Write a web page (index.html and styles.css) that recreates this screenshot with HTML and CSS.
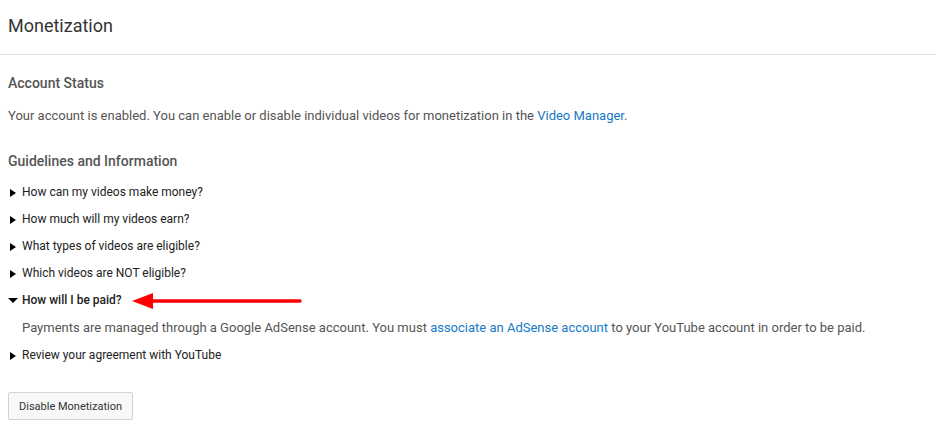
FILE: index.html
```html
<!DOCTYPE html>
<html>
<head>
<meta charset="utf-8">
<link rel="stylesheet" href="styles.css">
</head>
<body>
<div class="header"><h1 class="title">Monetization</h1></div>
<div class="content">
  <h2 class="section-title">Account Status</h2>
  <p class="text">Your account is enabled. You can enable or disable individual videos for monetization in the <a class="link" href="#">Video Manager</a>.</p>
  <h2 class="section-title guide">Guidelines and Information</h2>
  <ul class="faq">
    <li class="item"><span class="tri right"></span>How can my videos make money?</li>
    <li class="item"><span class="tri right"></span>How much will my videos earn?</li>
    <li class="item"><span class="tri right"></span>What types of videos are eligible?</li>
    <li class="item"><span class="tri right"></span>Which videos are NOT eligible?</li>
    <li class="item open"><span class="tri down"></span>How will I be paid?
      <svg class="arrow" width="172" height="18" viewBox="0 0 172 18"><path d="M0 9 L21 1 L21 17 Z" fill="#f00"/><path d="M20 9 L168 9" stroke="#f00" stroke-width="3.5" stroke-linecap="round"/></svg>
    </li>
    <li class="answer">Payments are managed through a Google AdSense account. You must <a class="link" href="#">associate an AdSense account</a> to your YouTube account in order to be paid.</li>
    <li class="item"><span class="tri right"></span>Review your agreement with YouTube</li>
  </ul>
  <button class="btn">Disable Monetization</button>
</div>
</body>
</html>
```
FILE: styles.css
```css
html, body { margin: 0; padding: 0; background: #fff; }
body { font-family: Roboto, "Noto Sans", Arial, sans-serif; color: #333; }
.header { height: 54px; border-bottom: 1px solid #e2e2e2; padding: 0 8px; display: flex; align-items: center; }
.title { margin: 0; font-size: 18px; font-weight: 400; color: #333; position: relative; top: -2px; }
.content { padding: 20px 8px 0; }
.section-title { margin: 0; font-size: 14px; font-weight: 500; color: #555; line-height: 16px; }
.text { margin: 16px 0 0; font-size: 13px; line-height: 18px; color: #555; }
.guide { margin-top: 28px; }
.link { color: #167ac6; text-decoration: none; }
.faq { list-style: none; margin: 10px 0 0; padding: 0; }
.item { display: flex; align-items: center; font-size: 12px; line-height: 15px; color: #222; height: 27px; }
.item.open { font-weight: 500; color: #222; }
.tri { display: inline-block; width: 0; height: 0; flex: none; }
.tri.right { border-top: 4px solid transparent; border-bottom: 4px solid transparent; border-left: 6px solid #000; margin-left: 2px; margin-right: 6px; }
.tri.down { border-left: 5px solid transparent; border-right: 5px solid transparent; border-top: 5px solid #000; margin-left: 0; margin-right: 4px; }
.arrow { margin-left: 10px; }
.answer { font-size: 13px; line-height: 18px; color: #555; padding: 5px 0 5px 14px; }
.btn { margin-top: 23px; font-family: Roboto, Arial, sans-serif; font-size: 11px; color: #333; background: #f8f8f8; border: 1px solid #d3d3d3; border-radius: 2px; height: 28px; padding: 0 10px; box-shadow: 0 1px 0 rgba(0,0,0,0.05); }
```
